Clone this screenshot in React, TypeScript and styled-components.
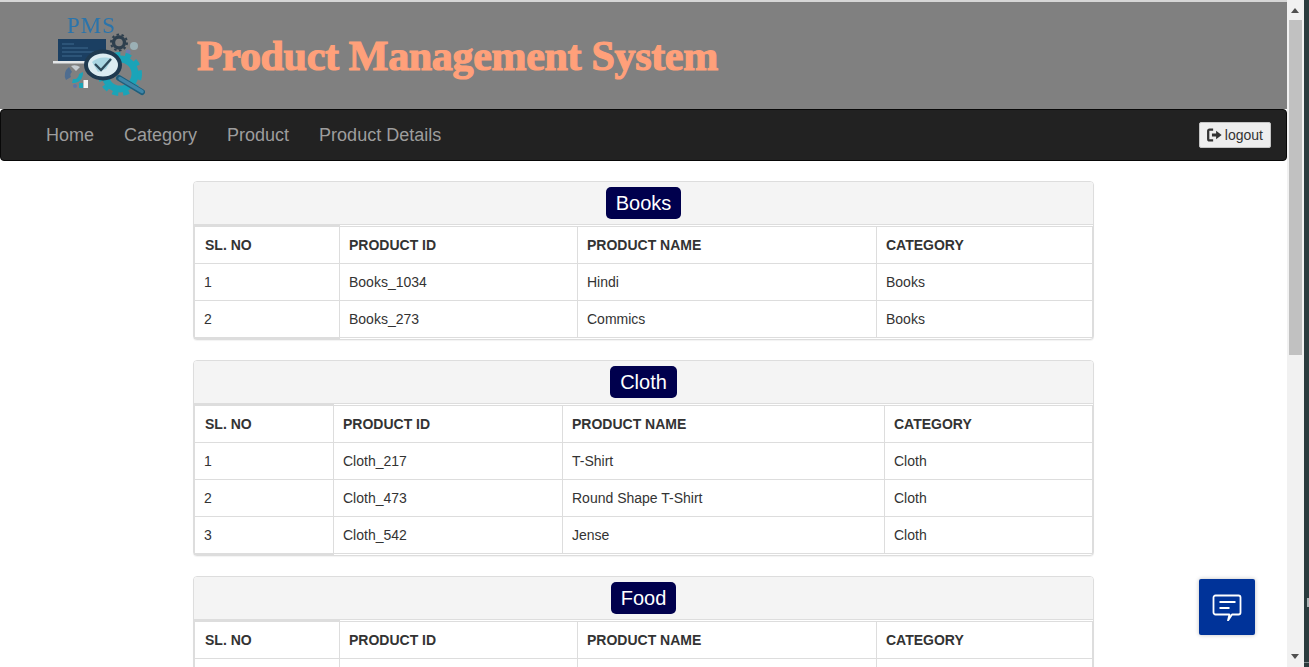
import React from 'react';
import styled, { createGlobalStyle } from 'styled-components';

const Global = createGlobalStyle`
  html, body { margin: 0; padding: 0; height: 100%; overflow: hidden; background: #fff; }
  body { font-family: "Liberation Sans", Arial, sans-serif; font-size: 14px; line-height: 20px; color: #333; }
  * { box-sizing: border-box; }
`;

const Screen = styled.div`
  position: relative;
  display: flex;
  width: 1309px;
  height: 667px;
  overflow: hidden;
`;
const Main = styled.main`
  width: 1287px;
  height: 667px;
  overflow: hidden;
  flex: none;
`;
const Banner = styled.header`
  height: 109px;
  background: #808080;
  border-top: 2px solid #d6d6d6;
  display: flex;
  align-items: center;
  padding-left: 47px;
`;
const LogoBox = styled.div`
  width: 106px;
  height: 84px;
  flex: none;
  margin-top: -4px;
  svg { display: block; filter: blur(0.6px); }
`;
const Title = styled.h1`
  margin: 0 0 0 44px;
  font-family: "Liberation Serif", "Times New Roman", serif;
  font-weight: 700;
  font-size: 42px;
  line-height: 44px;
  color: #ffa07a;
  -webkit-text-stroke: 1.2px #ffa07a;
  letter-spacing: -0.32px;
  white-space: nowrap;
`;
const Navbar = styled.nav`
  height: 52px;
  background: #222;
  border: 1px solid #080808;
  border-radius: 4px;
  display: flex;
  align-items: center;
  justify-content: space-between;
  padding: 0 15px 0 30px;
`;
const NavList = styled.ul`
  display: flex;
  list-style: none;
  margin: 0;
  padding: 0;
`;
const NavLink = styled.li`
  padding: 0 15px;
  font-size: 18px;
  line-height: 50px;
  color: #9d9d9d;
`;
const LogoutButton = styled.button`
  display: flex;
  align-items: center;
  gap: 2px;
  width: 72px;
  height: 26px;
  padding: 0 7px;
  background: #eee;
  border: 1px solid #c4c4c4;
  border-radius: 2px;
  font-family: "Liberation Sans", Arial, sans-serif;
  font-size: 14px;
  color: #333;
`;
const Content = styled.section`
  display: flex;
  flex-direction: column;
  gap: 20px;
  width: 901px;
  margin: 20px 0 0 193px;
`;
const Panel = styled.article`
  flex: none;
  background: #fff;
  border: 1px solid #ddd;
  border-radius: 4px;
  box-shadow: 0 1px 1px rgba(0, 0, 0, 0.05);
`;
const PanelHeading = styled.div`
  display: flex;
  justify-content: center;
  padding: 5px 15px;
  background: #f4f4f4;
  border-bottom: 1px solid #ddd;
  border-radius: 3px 3px 0 0;
`;
const Badge = styled.span`
  height: 32px;
  padding: 0 10px;
  background: #00004d;
  border-radius: 5px;
  color: #fff;
  font-size: 20px;
  line-height: 32px;
`;
const Table = styled.table`
  display: table;
  width: 899px;
  margin: 1px 0;
  table-layout: fixed;
  border-collapse: separate;
  border-spacing: 0;
`;
const Column = styled.col<{ $w: number }>`
  width: ${p => p.$w}px;
`;
const HeadCell = styled.th`
  height: 37px;
  padding: 8px 8px 8px 9px;
  text-align: left;
  font-size: 14px;
  font-weight: 700;
  line-height: 20px;
  text-transform: uppercase;
  border-top: 1px solid #ddd;
  border-right: 1px solid #ddd;
  border-bottom: 1px solid #ddd;
  &:first-child {
    padding-left: 10px;
    border-left: 1px solid #ddd;
    box-shadow: 0 -1px 0 #ddd;
  }
`;
const Cell = styled.td`
  height: 37px;
  padding: 8px 8px 8px 9px;
  font-size: 14px;
  line-height: 20px;
  border-right: 1px solid #ddd;
  border-bottom: 1px solid #ddd;
  &:first-child {
    padding-left: 9px;
    border-left: 1px solid #ddd;
  }
  tr:last-child > &:first-child {
    box-shadow: 0 1px 0 #ddd;
  }
`;
const Scrollbar = styled.aside`
  position: relative;
  width: 17px;
  height: 667px;
  flex: none;
  background: #f1f1f1;
`;
const ScrollThumb = styled.div`
  position: absolute;
  left: 2px;
  top: 20px;
  width: 13px;
  height: 335px;
  background: #c1c1c1;
`;
const ArrowUp = styled.div`
  position: absolute;
  left: 4px;
  top: 8px;
  border-left: 4.5px solid transparent;
  border-right: 4.5px solid transparent;
  border-bottom: 5px solid #505050;
`;
const ArrowDown = styled.div`
  position: absolute;
  left: 4px;
  bottom: 8px;
  border-left: 4.5px solid transparent;
  border-right: 4.5px solid transparent;
  border-top: 5px solid #505050;
`;
const DesktopEdge = styled.div`
  position: relative;
  width: 5px;
  height: 667px;
  flex: none;
  background: #2a3b3d;
`;
const EdgeMark = styled.div`
  position: absolute;
  right: 0;
  top: 598px;
  width: 2px;
  height: 9px;
  background: #a9b3b4;
`;
const EdgeLine = styled.div`
  position: absolute;
  left: 0;
  top: 662px;
  width: 5px;
  height: 1px;
  background: #7d8a8b;
`;
const ChatButton = styled.button`
  position: absolute;
  left: 1199px;
  top: 579px;
  width: 56px;
  height: 56px;
  padding: 0;
  display: flex;
  align-items: center;
  justify-content: center;
  background: #003399;
  border: none;
  border-radius: 2px;
  box-shadow: 0 0 4px rgba(0, 0, 0, 0.25);
`;

const Logo = () => (
  <svg width="106" height="84" viewBox="47 12 106 84">
    <text x="67" y="33" fontFamily="Liberation Serif, serif" fontSize="23" letterSpacing="1" fill="#2a74ab">PMS</text>
    <rect x="58" y="39" width="48" height="22" fill="#1b3f62" />
    <path d="M62 44h12M62 48h26M62 52h32M62 56h20" stroke="#3f6a8e" strokeWidth="1" />
    <rect x="53" y="61" width="33" height="2.500" fill="#e3e6e8" />
    <circle cx="119" cy="42.500" r="5.500" fill="none" stroke="#2e3f4d" strokeWidth="3.400" />
    <circle cx="119" cy="42.500" r="8" fill="none" stroke="#2e3f4d" strokeWidth="2" strokeDasharray="2.500 2.500" />
    <circle cx="134" cy="46" r="4" fill="#9bb0b5" />
    <circle cx="128" cy="52" r="2.500" fill="#6d7cae" />
    <circle cx="120" cy="74" r="15" fill="none" stroke="#1aa4b8" strokeWidth="7" />
    <circle cx="120" cy="74" r="20" fill="none" stroke="#1aa4b8" strokeWidth="4" strokeDasharray="6 5" />
    <path d="M119 78L142 92" stroke="#1f5f7c" strokeWidth="6" strokeLinecap="round" />
    <path d="M120 78.500L142 91.500" stroke="#3f86a8" strokeWidth="3.500" strokeLinecap="round" />
    <ellipse cx="103" cy="65" rx="17" ry="13.500" fill="#dcecf1" stroke="#1f3a50" strokeWidth="4" />
    <path d="M92 62c4-4 12-6 20-3l-6 10-8 3z" fill="#a9d6e2" />
    <path d="M95 64l6 6 10-11" fill="none" stroke="#2e4a5a" strokeWidth="2.300" />
    <path d="M66 80a10 10 0 0 1 3-13l3 5a4 4 0 0 0-1 5z" fill="#4f6d90" />
    <path d="M71 66a10 10 0 0 1 9 1l-4 4z" fill="#c5ccd2" />
    <path d="M83 72a10 10 0 0 1-11 11l1-4a5 5 0 0 0 6-5z" fill="#1aa4b8" />
    <rect x="79" y="83" width="4" height="5" fill="#1aa4b8" />
    <rect x="83.500" y="80" width="4.500" height="8" fill="#f4f4f4" />
    <circle cx="75" cy="86" r="2" fill="#5f74a8" />
  </svg>
);

const LogoutIcon = () => (
  <svg width="16" height="14" viewBox="0 0 16 14">
    <path d="M6.200 1.500H2.600Q1.200 1.500 1.200 3v8q0 1.500 1.400 1.500h3.600" fill="none" stroke="#333" strokeWidth="2.300" />
    <path d="M5 5.400h4.200V2.600L14.800 7l-5.600 4.400V8.600H5z" fill="#333" />
  </svg>
);

const ChatIcon = () => (
  <svg width="30" height="28" viewBox="0 0 30 28" fill="none" stroke="#fff" strokeWidth="1.800">
    <path d="M3.500 2.500h23a2 2 0 0 1 2 2v15a2 2 0 0 1-2 2H20l-4 6 1.500-6H3.500a2 2 0 0 1-2-2v-15a2 2 0 0 1 2-2z" strokeLinejoin="round" />
    <path d="M7.500 9h16M7.500 15h10" />
  </svg>
);

type Group = { name: string; cols: number[]; rows: string[][] };

const groups: Group[] = [
  {
    name: 'Books',
    cols: [146, 238, 299, 216],
    rows: [
      ['1', 'Books_1034', 'Hindi', 'Books'],
      ['2', 'Books_273', 'Commics', 'Books'],
    ],
  },
  {
    name: 'Cloth',
    cols: [140, 229, 322, 208],
    rows: [
      ['1', 'Cloth_217', 'T-Shirt', 'Cloth'],
      ['2', 'Cloth_473', 'Round Shape T-Shirt', 'Cloth'],
      ['3', 'Cloth_542', 'Jense', 'Cloth'],
    ],
  },
  {
    name: 'Food',
    cols: [146, 238, 299, 216],
    rows: [['', '', '', '']],
  },
];

const headers = ['Sl. No', 'Product ID', 'Product Name', 'Category'];

export default function App() {
  return (
    <Screen>
      <Global />
      <Main>
        <Banner>
          <LogoBox><Logo /></LogoBox>
          <Title>Product Management System</Title>
        </Banner>
        <Navbar>
          <NavList>
            {['Home', 'Category', 'Product', 'Product Details'].map(item => (
              <NavLink key={item}>{item}</NavLink>
            ))}
          </NavList>
          <LogoutButton><LogoutIcon />logout</LogoutButton>
        </Navbar>
        <Content>
          {groups.map(group => (
            <Panel key={group.name}>
              <PanelHeading><Badge>{group.name}</Badge></PanelHeading>
              <Table>
                <colgroup>
                  {group.cols.map((w, i) => <Column key={i} $w={w} />)}
                </colgroup>
                <thead>
                  <tr>{headers.map(h => <HeadCell key={h}>{h}</HeadCell>)}</tr>
                </thead>
                <tbody>
                  {group.rows.map((row, r) => (
                    <tr key={r}>{row.map((c, i) => <Cell key={i}>{c}</Cell>)}</tr>
                  ))}
                </tbody>
              </Table>
            </Panel>
          ))}
        </Content>
      </Main>
      <Scrollbar>
        <ArrowUp />
        <ScrollThumb />
        <ArrowDown />
      </Scrollbar>
      <DesktopEdge>
        <EdgeMark />
        <EdgeLine />
      </DesktopEdge>
      <ChatButton aria-label="Chat"><ChatIcon /></ChatButton>
    </Screen>
  );
}
